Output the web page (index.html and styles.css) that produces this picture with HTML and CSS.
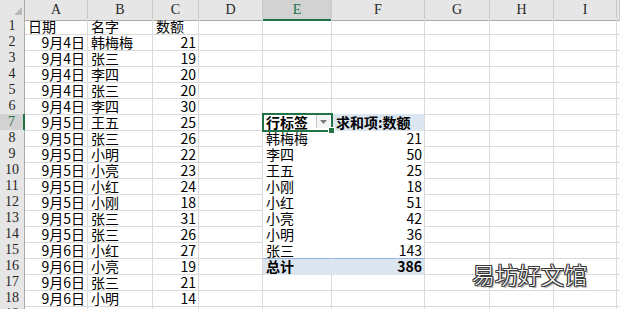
FILE: index.html
```html
<!DOCTYPE html>
<html lang="zh">
<head>
<meta charset="utf-8">
<title>数据透视表</title>
<link rel="stylesheet" href="styles.css">
</head>
<body>
<div class="sheet">
  <div class="r hdr">
    <div class="corner"><svg width="25" height="18" viewBox="0 0 25 18"><polygon points="22,7 22,15 14,15" fill="#b9b9b9"/></svg></div>
    <div class="ch">A</div><div class="ch">B</div><div class="ch">C</div><div class="ch">D</div><div class="ch sel">E</div><div class="ch">F</div><div class="ch">G</div><div class="ch">H</div><div class="ch">I</div><div class="ch"></div>
  </div>
  <div class="r"><div class="h">1</div><div class="c">日期</div><div class="c">名字</div><div class="c">数额</div><div class="c"></div><div class="c"></div><div class="c"></div><div class="c"></div><div class="c"></div><div class="c"></div><div class="c"></div></div>
  <div class="r"><div class="h">2</div><div class="c n">9月4日</div><div class="c">韩梅梅</div><div class="c n">21</div><div class="c"></div><div class="c"></div><div class="c"></div><div class="c"></div><div class="c"></div><div class="c"></div><div class="c"></div></div>
  <div class="r"><div class="h">3</div><div class="c n">9月4日</div><div class="c">张三</div><div class="c n">19</div><div class="c"></div><div class="c"></div><div class="c"></div><div class="c"></div><div class="c"></div><div class="c"></div><div class="c"></div></div>
  <div class="r"><div class="h">4</div><div class="c n">9月4日</div><div class="c">李四</div><div class="c n">20</div><div class="c"></div><div class="c"></div><div class="c"></div><div class="c"></div><div class="c"></div><div class="c"></div><div class="c"></div></div>
  <div class="r"><div class="h">5</div><div class="c n">9月4日</div><div class="c">张三</div><div class="c n">20</div><div class="c"></div><div class="c"></div><div class="c"></div><div class="c"></div><div class="c"></div><div class="c"></div><div class="c"></div></div>
  <div class="r"><div class="h">6</div><div class="c n">9月4日</div><div class="c">李四</div><div class="c n">30</div><div class="c"></div><div class="c"></div><div class="c"></div><div class="c"></div><div class="c"></div><div class="c"></div><div class="c"></div></div>
  <div class="r"><div class="h hsel">7</div><div class="c n">9月5日</div><div class="c">王五</div><div class="c n">25</div><div class="c"></div><div class="c pe ph active">行标签<span class="dd"><svg width="7" height="4" viewBox="0 0 7 4"><polygon points="0,0 7,0 3.5,4" fill="#7a7a7a"/></svg></span><span class="handle"></span></div><div class="c pf ph">求和项:数额</div><div class="c"></div><div class="c"></div><div class="c"></div><div class="c"></div></div>
  <div class="r"><div class="h">8</div><div class="c n">9月5日</div><div class="c">张三</div><div class="c n">26</div><div class="c"></div><div class="c pe">韩梅梅</div><div class="c pf n">21</div><div class="c"></div><div class="c"></div><div class="c"></div><div class="c"></div></div>
  <div class="r"><div class="h">9</div><div class="c n">9月5日</div><div class="c">小明</div><div class="c n">22</div><div class="c"></div><div class="c pe">李四</div><div class="c pf n">50</div><div class="c"></div><div class="c"></div><div class="c"></div><div class="c"></div></div>
  <div class="r"><div class="h">10</div><div class="c n">9月5日</div><div class="c">小亮</div><div class="c n">23</div><div class="c"></div><div class="c pe">王五</div><div class="c pf n">25</div><div class="c"></div><div class="c"></div><div class="c"></div><div class="c"></div></div>
  <div class="r"><div class="h">11</div><div class="c n">9月5日</div><div class="c">小红</div><div class="c n">24</div><div class="c"></div><div class="c pe">小刚</div><div class="c pf n">18</div><div class="c"></div><div class="c"></div><div class="c"></div><div class="c"></div></div>
  <div class="r"><div class="h">12</div><div class="c n">9月5日</div><div class="c">小刚</div><div class="c n">18</div><div class="c"></div><div class="c pe">小红</div><div class="c pf n">51</div><div class="c"></div><div class="c"></div><div class="c"></div><div class="c"></div></div>
  <div class="r"><div class="h">13</div><div class="c n">9月5日</div><div class="c">张三</div><div class="c n">31</div><div class="c"></div><div class="c pe">小亮</div><div class="c pf n">42</div><div class="c"></div><div class="c"></div><div class="c"></div><div class="c"></div></div>
  <div class="r"><div class="h">14</div><div class="c n">9月5日</div><div class="c">张三</div><div class="c n">26</div><div class="c"></div><div class="c pe">小明</div><div class="c pf n">36</div><div class="c"></div><div class="c"></div><div class="c"></div><div class="c"></div></div>
  <div class="r"><div class="h">15</div><div class="c n">9月6日</div><div class="c">小红</div><div class="c n">27</div><div class="c"></div><div class="c pe">张三</div><div class="c pf n">143</div><div class="c"></div><div class="c"></div><div class="c"></div><div class="c"></div></div>
  <div class="r"><div class="h">16</div><div class="c n">9月6日</div><div class="c">小亮</div><div class="c n">19</div><div class="c"></div><div class="c pe pt">总计</div><div class="c pf pt n">386</div><div class="c"></div><div class="c"></div><div class="c"></div><div class="c"></div></div>
  <div class="r"><div class="h">17</div><div class="c n">9月6日</div><div class="c">张三</div><div class="c n">21</div><div class="c"></div><div class="c"></div><div class="c"></div><div class="c"></div><div class="c"></div><div class="c"></div><div class="c"></div></div>
  <div class="r"><div class="h">18</div><div class="c n">9月6日</div><div class="c">小明</div><div class="c n">14</div><div class="c"></div><div class="c"></div><div class="c"></div><div class="c"></div><div class="c"></div><div class="c"></div><div class="c"></div></div>
  <div class="r"><div class="h">19</div><div class="c"></div><div class="c"></div><div class="c"></div><div class="c"></div><div class="c"></div><div class="c"></div><div class="c"></div><div class="c"></div><div class="c"></div><div class="c"></div></div>
  <div class="wm">易坊好文馆</div>
</div>
</body>
</html>
```
FILE: styles.css
```css
html, body {
  margin: 0;
  padding: 0;
  background: #fff;
  overflow: hidden;
}
.sheet {
  position: relative;
  width: 620px;
  height: 309px;
  overflow: hidden;
  font-family: "Noto Sans CJK SC", "Noto Sans", sans-serif;
  font-size: 14px;
  color: #000;
}
.r {
  display: grid;
  grid-template-columns: 25px 63px 65px 46px 64px 69px 93px 65px 64px 63px 3px;
  height: 16px;
}
.r.hdr {
  height: 18px;
}
.r > div {
  box-sizing: border-box;
  white-space: nowrap;
}
.corner {
  background: #e6e6e6;
  border-right: 1px solid #ababab;
  border-bottom: 1px solid #ababab;
}
.corner svg { display: block; }
.ch {
  background: #e6e6e6;
  border-right: 1px solid #c9c9c9;
  border-bottom: 1px solid #ababab;
  text-align: center;
  font-family: "Liberation Serif", "DejaVu Serif", serif;
  font-size: 14px;
  line-height: 19px;
  color: #262626;
}
.ch.sel {
  background: #d2d2d2;
  color: #217346;
  border-bottom: 2px solid #217346;
}
.h {
  background: #e6e6e6;
  border-right: 1px solid #ababab;
  border-bottom: 1px solid #c9c9c9;
  text-align: center;
  font-family: "Liberation Serif", "DejaVu Serif", serif;
  font-size: 14px;
  line-height: 16px;
  color: #262626;
}
.h.hsel {
  background: #d2d2d2;
  color: #217346;
  border-right: 2px solid #217346;
}
.c {
  border-right: 1px solid #dadada;
  border-bottom: 1px solid #dadada;
  padding: 0 2px 0 3px;
  line-height: 16px;
}
.n {
  text-align: right;
}
.pe {
  border-right-color: transparent;
  border-bottom-color: transparent;
}
.pf {
  border-bottom-color: transparent;
}
.ph {
  font-weight: bold;
}
.pf.ph {
  background: #dce6f1;
  padding-left: 4px;
}
.pt {
  background: #dce6f1;
  font-weight: bold;
  border-top: 1px solid #95b3d7;
  line-height: 15px;
}
.active {
  position: relative;
  background: #fff;
  outline: 2px solid #217346;
  outline-offset: -1px;
  z-index: 2;
}
.dd {
  position: absolute;
  right: 1px;
  top: 1px;
  width: 14px;
  height: 13px;
  box-sizing: border-box;
  border-left: 1px solid #c6c6c6;
  background: #f4f4f4;
  display: flex;
  align-items: center;
  justify-content: center;
}
.dd svg { display: block; }
.handle {
  position: absolute;
  right: -4px;
  bottom: -4px;
  width: 5px;
  height: 5px;
  background: #217346;
  border: 1px solid #fff;
}
.wm {
  position: absolute;
  left: 472px;
  top: 259px;
  font-size: 23px;
  line-height: 30px;
  color: #fff;
  font-weight: 300;
  text-shadow:
    1px 0 0 #3a3a3a, -1px 0 0 #3a3a3a, 0 1px 0 #3a3a3a, 0 -1px 0 #3a3a3a,
    1px 1px 0 #3a3a3a, -1px -1px 0 #3a3a3a, 1px -1px 0 #3a3a3a, -1px 1px 0 #3a3a3a,
    2px 2px 1px #999;
}
```
